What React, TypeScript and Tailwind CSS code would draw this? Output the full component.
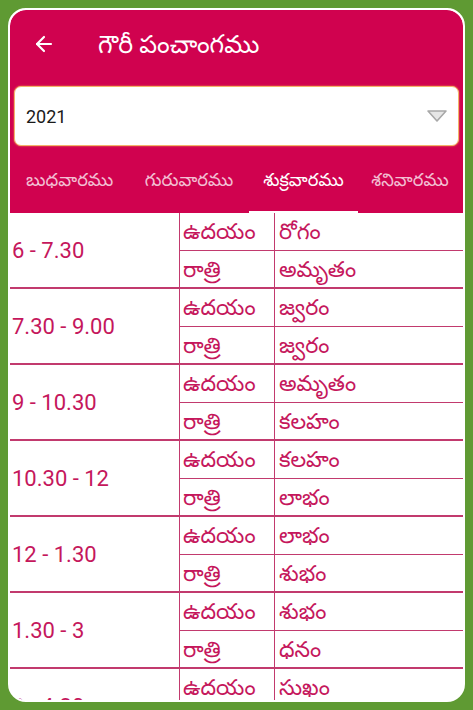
import { ArrowLeft } from 'lucide-react';

interface Slot {
  time: string;
  day: string;
  night: string;
}

const slots: Slot[] = [
  { time: '6 - 7.30', day: 'రోగం', night: 'అమృతం' },
  { time: '7.30 - 9.00', day: 'జ్వరం', night: 'జ్వరం' },
  { time: '9 - 10.30', day: 'అమృతం', night: 'కలహం' },
  { time: '10.30 - 12', day: 'కలహం', night: 'లాభం' },
  { time: '12 - 1.30', day: 'లాభం', night: 'శుభం' },
  { time: '1.30 - 3', day: 'శుభం', night: 'ధనం' },
  { time: '3 - 4.30', day: 'సుఖం', night: 'రోగం' },
];

const tabs = [
  { label: 'బుధవారము', w: 'w-[119px]', active: false },
  { label: 'గురువారము', w: 'w-[120px]', active: false },
  { label: 'శుక్రవారము', w: 'w-[109px]', active: true },
  { label: 'శనివారము', w: 'w-[104px]', active: false },
];

export default function App() {
  return (
    <div
      className="h-[710px] w-[473px] bg-[#5f9a33] p-[8px] overflow-hidden"
      style={{ fontFamily: 'Roboto, "Noto Sans", "Noto Sans Telugu", sans-serif' }}
    >
      <div className="h-[694px] w-[457px] rounded-[18px] border-2 border-white bg-white overflow-hidden flex flex-col">
        {/* toolbar */}
        <div className="bg-[#d0024f] rounded-t-[16px] text-white shrink-0">
          <div className="h-[76px] flex items-center pb-[8px]">
            <button className="ml-[22px] w-[24px] h-[24px] flex items-center justify-center">
              <ArrowLeft className="w-6 h-6" strokeWidth={2.2} />
            </button>
            <h1 className="ml-[42px] text-[25px] leading-none">గౌరీ పంచాంగము</h1>
          </div>

          {/* year select */}
          <div className="px-[4px]">
            <div className="h-[60px] rounded-[7px] bg-white border border-[#f2b46a] shadow-[0_0_2px_rgba(255,180,80,0.8)] flex items-center justify-between pl-[11px] pr-[10px]">
              <span className="text-[18px] text-[#1a1a1a]">2021</span>
              <svg width="22" height="14" viewBox="0 0 22 14">
                <path d="M2 2 L20 2 L11 12 Z" fill="#e6e6e6" stroke="#a8a8a8" strokeWidth="1.6" strokeLinejoin="round" />
              </svg>
            </div>
          </div>

          {/* tabs */}
          <div className="flex h-[66px] mt-[1px]">
            {tabs.map((t) => (
              <div
                key={t.label}
                className={`${t.w} shrink-0 flex flex-col items-center justify-center relative text-[18px] pb-[2px] ${
                  t.active ? 'text-white' : 'text-white/75'
                }`}
              >
                <span className="whitespace-nowrap">{t.label}</span>
                {t.active && <div className="absolute bottom-0 left-0 right-0 h-[2px] bg-white" />}
              </div>
            ))}
          </div>
        </div>

        {/* table */}
        <div className="flex-1 overflow-hidden text-[#c5175c]">
          {slots.map((s) => (
            <div key={s.time} className="flex border-b-2 border-[#c23a6e]">
              <div className="w-[170px] shrink-0 flex items-center pl-[2px] text-[22px] border-r border-[#c23a6e]">
                {s.time}
              </div>
              <div className="flex-1 min-w-0 flex flex-col text-[22px]">
                <div className="h-[38px] flex border-b border-[#c23a6e]">
                  <div className="w-[95px] shrink-0 pl-[3px] flex items-center border-r border-[#c23a6e] whitespace-nowrap">ఉదయం</div>
                  <div className="flex-1 pl-[4px] flex items-center whitespace-nowrap">{s.day}</div>
                </div>
                <div className="h-[36px] flex">
                  <div className="w-[95px] shrink-0 pl-[3px] flex items-center border-r border-[#c23a6e] whitespace-nowrap">రాత్రి</div>
                  <div className="flex-1 pl-[4px] flex items-center whitespace-nowrap">{s.night}</div>
                </div>
              </div>
            </div>
          ))}
        </div>
      </div>
    </div>
  );
}
